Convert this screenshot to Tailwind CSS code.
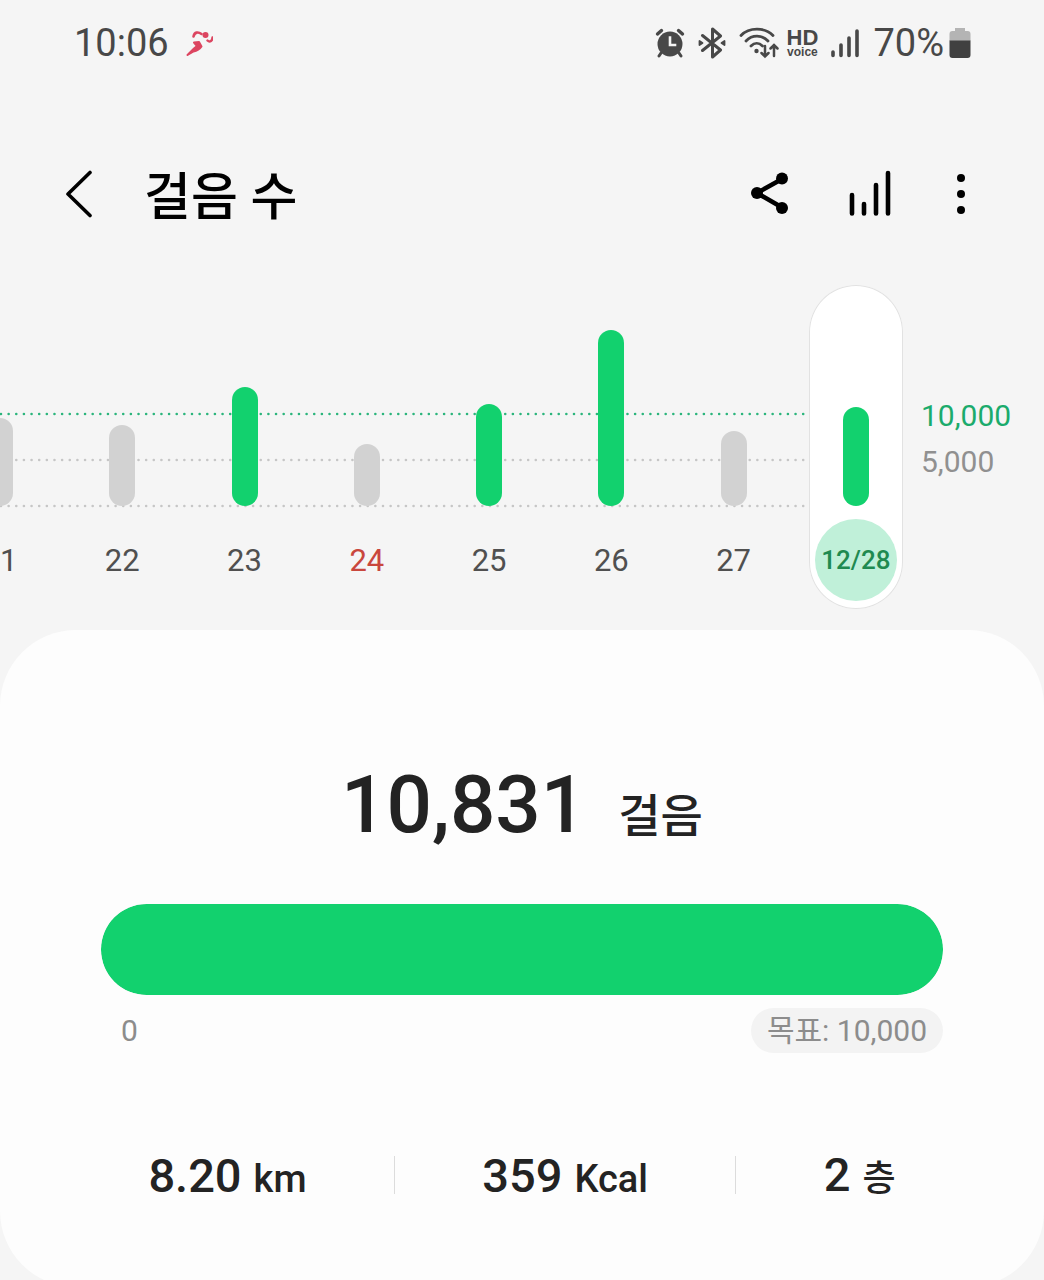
<!DOCTYPE html>
<html lang="ko">
<head>
    <meta charset="UTF-8">
    <meta name="viewport" content="width=device-width, initial-scale=1.0">
    <title>걸음 수</title>
    <script src="https://cdn.jsdelivr.net/npm/@tailwindcss/browser@4"></script>
</head>
<body class="bg-[#f5f5f5] font-['Roboto','Noto_Sans_CJK_KR',sans-serif] text-[#232323]">
    <!-- Status bar -->
    <div class="flex h-[86px] items-center justify-between pl-[74px] pr-[73px] text-[38px] leading-none text-[#484848]">
        <div class="flex items-center gap-4">
            <span>10:06</span>
            <svg class="h-7 w-7" viewBox="0 0 28 28" fill="none" stroke="#dc4560" stroke-linecap="round" stroke-linejoin="round">
                <circle cx="20.500" cy="6" r="3" fill="#dc4560" stroke="none"/>
                <path d="M8.500 7.500C9.500 3 13 2.500 16.500 5" stroke-width="2.600"/>
                <path d="M22.500 11.500c2.500 2.500 5 0 5-3" stroke-width="2.400"/>
                <path d="M9 13.500l5-.5 2.500 4.500c-2 3-5 4.500-8 5l-6 3.500 6.500-6.500 3-2.500z" fill="#dc4560" stroke-width="2"/>
            </svg>
        </div>
        <div class="flex items-center">
            <!-- alarm -->
            <svg class="h-[30px] w-[30px]" viewBox="0 0 30 30" fill="none" stroke="#484848" stroke-linecap="round">
                <circle cx="15" cy="16" r="12.500" fill="#484848" stroke="none"/>
                <path d="M2.500 6l4-3.500M27.500 6l-4-3.500" stroke-width="3.400"/>
                <path d="M6 25l-2 3M24 25l2 3" stroke-width="3"/>
                <path d="M15 9.500V17h5" stroke="#f5f5f5" stroke-width="2.600" stroke-linecap="square"/>
            </svg>
            <!-- bluetooth -->
            <svg class="ml-3 h-[32px] w-[30px]" viewBox="0 0 30 32" fill="none" stroke="#484848" stroke-width="3" stroke-linecap="round" stroke-linejoin="round">
                <path d="M5.500 8.500L23.500 23l-8 7V2l8 7L5.500 23.500"/>
                <path d="M2.500 14v4l3-2zM27.500 14v4l-3-2z" fill="#484848" stroke-width="1.800"/>
            </svg>
            <!-- wifi -->
            <svg class="ml-3 h-[32px] w-[40px]" viewBox="0 0 40 32" fill="none" stroke="#484848" stroke-width="2.800" stroke-linecap="round">
                <path d="M2 8.500C10 0 26 0 34 8.500"/>
                <path d="M7 14c6-6.500 16-6.500 22 0"/>
                <path d="M12 19c3.500-3.500 8-3.500 11.500 0"/>
                <circle cx="17.500" cy="24" r="2.200" fill="#484848" stroke="none"/>
                <path d="M26 19v10.500M22.500 26l3.500 3.500 3.500-3.500M35 29V18M31.500 21.500L35 18l3.500 3.500" stroke-width="2.500"/>
            </svg>
            <div class="ml-[6px] flex w-[34px] flex-col items-center font-['Liberation_Sans',sans-serif] font-bold">
                <span class="text-[22px] leading-[18px]">HD</span>
                <span class="text-[12px] leading-[11px]">voice</span>
            </div>
            <!-- signal -->
            <svg class="ml-3 h-[30px] w-[28px]" viewBox="0 0 28 30" stroke="#484848" stroke-width="3.600" stroke-linecap="round">
                <path d="M2 24v3.500M10 17v10.500M18 10v17.500M26 3v24.500"/>
            </svg>
            <span class="ml-[14px]">70%</span>
            <!-- battery -->
            <svg class="ml-[5px] h-[32px] w-[22px]" viewBox="0 0 22 32">
                <path d="M6 1h10v3h2.500a3 3 0 0 1 3 3v7H.5V7a3 3 0 0 1 3-3H6z" fill="#b4b4b4"/>
                <path d="M.5 13.500h21V28a3 3 0 0 1-3 3h-15a3 3 0 0 1-3-3z" fill="#404040"/>
            </svg>
        </div>
    </div>

    <!-- App bar -->
    <header class="flex h-[199px] items-center pl-[60px] pr-[75px] pt-4 text-black">
        <button class="flex h-12 w-10 items-center justify-center" aria-label="뒤로">
            <svg class="h-12 w-10" viewBox="0 0 40 48" fill="none" stroke="currentColor" stroke-width="3.600" stroke-linecap="round" stroke-linejoin="round">
                <path d="M30 2.500L8 24l22 21.500"/>
            </svg>
        </button>
        <h1 class="ml-11 flex-1 pt-2 text-[51px] font-medium leading-none">걸음 수</h1>
        <button aria-label="공유">
            <svg class="h-12 w-10" viewBox="0 0 40 48" fill="currentColor" stroke="currentColor">
                <path d="M34 8.500L8 23l26 15" fill="none" stroke-width="4.600"/>
                <circle cx="33" cy="8.500" r="6" stroke="none"/>
                <circle cx="8" cy="23" r="6" stroke="none"/>
                <circle cx="33" cy="38" r="6" stroke="none"/>
            </svg>
        </button>
        <button class="ml-[58px]" aria-label="통계">
            <svg class="h-12 w-11" viewBox="0 0 44 48" stroke="currentColor" stroke-width="4.600" stroke-linecap="round">
                <path d="M5 25v18.500M17 34v9.500M29 15v28.500M41 3v40.500"/>
            </svg>
        </button>
        <button class="ml-[62px]" aria-label="더보기">
            <svg class="h-12 w-4" viewBox="0 0 16 48" fill="currentColor">
                <circle cx="8" cy="8" r="4"/>
                <circle cx="8" cy="24" r="4"/>
                <circle cx="8" cy="40" r="4"/>
            </svg>
        </button>
    </header>

    <!-- Daily chart -->
    <section class="flex h-[324px] text-[31px] leading-none">
        <div class="relative flex min-w-0 flex-1 justify-end overflow-hidden text-[#505050]">
            <div class="absolute inset-y-0 left-0 right-[61px]">
                <svg class="h-full w-full" fill="none" stroke-width="2.600" stroke-linecap="round" stroke-dasharray="0 7.640">
                    <line x1="1" x2="100%" y1="129" y2="129" stroke="#2bb57c"/>
                    <line x1="1" x2="100%" y1="175" y2="175" stroke="#c6c6c6"/>
                    <line x1="1" x2="100%" y1="221" y2="221" stroke="#c6c6c6"/>
                </svg>
            </div>
            <div class="relative flex w-[13.3333%] shrink-0 flex-col items-center">
                <div class="flex h-[221px] items-end"><div class="w-[26px] rounded-full bg-[#d2d2d2]" style="height: 88px"></div></div>
                <div class="mt-[13px] flex h-[82px] items-center">21</div>
            </div>
            <div class="relative flex w-[13.3333%] shrink-0 flex-col items-center">
                <div class="flex h-[221px] items-end"><div class="w-[26px] rounded-full bg-[#d2d2d2]" style="height: 81px"></div></div>
                <div class="mt-[13px] flex h-[82px] items-center">22</div>
            </div>
            <div class="relative flex w-[13.3333%] shrink-0 flex-col items-center">
                <div class="flex h-[221px] items-end"><div class="w-[26px] rounded-full bg-[#12d16e]" style="height: 119px"></div></div>
                <div class="mt-[13px] flex h-[82px] items-center">23</div>
            </div>
            <div class="relative flex w-[13.3333%] shrink-0 flex-col items-center">
                <div class="flex h-[221px] items-end"><div class="w-[26px] rounded-full bg-[#d2d2d2]" style="height: 62px"></div></div>
                <div class="mt-[13px] flex h-[82px] items-center text-[#c9473d]">24</div>
            </div>
            <div class="relative flex w-[13.3333%] shrink-0 flex-col items-center">
                <div class="flex h-[221px] items-end"><div class="w-[26px] rounded-full bg-[#12d16e]" style="height: 102px"></div></div>
                <div class="mt-[13px] flex h-[82px] items-center">25</div>
            </div>
            <div class="relative flex w-[13.3333%] shrink-0 flex-col items-center">
                <div class="flex h-[221px] items-end"><div class="w-[26px] rounded-full bg-[#12d16e]" style="height: 176px"></div></div>
                <div class="mt-[13px] flex h-[82px] items-center">26</div>
            </div>
            <div class="relative flex w-[13.3333%] shrink-0 flex-col items-center">
                <div class="flex h-[221px] items-end"><div class="w-[26px] rounded-full bg-[#d2d2d2]" style="height: 75px"></div></div>
                <div class="mt-[13px] flex h-[82px] items-center">27</div>
            </div>
            <!-- today -->
            <div class="relative flex w-[13.3333%] shrink-0 justify-center">
                <div class="flex w-[94px] flex-col items-center rounded-full bg-white ring-1 ring-inset ring-[#e2e2e2]">
                    <div class="flex h-[221px] items-end"><div class="w-[26px] rounded-full bg-[#12d16e]" style="height: 99px"></div></div>
                    <div class="mt-[13px] flex size-[82px] items-center justify-center rounded-full bg-[#c0f0d9] text-[26px] font-medium text-[#1f8a50]">12/28</div>
                </div>
            </div>
        </div>
        <div class="flex w-[127px] flex-col pl-1 pt-[108px] text-[30px] leading-[46px]">
            <span class="text-[#1bab6c]">10,000</span>
            <span class="text-[#909090]">5,000</span>
        </div>
    </section>

    <!-- Summary card -->
    <main class="mt-[21px] rounded-[76px] bg-[#fdfdfd] pb-20 pt-[127px]">
        <div class="flex items-baseline justify-center gap-8 leading-[96px]">
            <span class="text-[80px] font-medium">10,831</span>
            <span class="text-[46px] font-medium">걸음</span>
        </div>

        <div class="mx-[101px] mt-10">
            <div class="h-[91px] overflow-hidden rounded-full bg-[#ececec]" role="progressbar" aria-label="걸음 수" aria-valuemin="0" aria-valuemax="10000" aria-valuenow="10000">
                <div class="h-full rounded-full bg-[#12d16e]" style="width: 100%"></div>
            </div>
            <div class="mt-[13px] flex items-center justify-between pl-5 text-[30px] leading-[45px] text-[#8c8c8c]">
                <span>0</span>
                <span class="h-[45px] rounded-full bg-[#f3f3f3] px-4">목표: 10,000</span>
            </div>
        </div>

        <div class="mx-[61px] mt-[90px] flex items-center text-[47px] font-medium leading-[56px]">
            <div class="flex flex-auto items-baseline justify-center gap-3 pt-1">8.20 <span class="text-[38px]">km</span></div>
            <div class="h-[38px] w-px bg-[#dcdcdc]"></div>
            <div class="flex flex-auto items-baseline justify-center gap-3 pt-1">359 <span class="text-[38px]">Kcal</span></div>
            <div class="h-[38px] w-px bg-[#dcdcdc]"></div>
            <div class="flex flex-auto items-baseline justify-center gap-3 pt-1">2 <span class="text-[36px]">층</span></div>
        </div>
    </main>
</body>
</html>
